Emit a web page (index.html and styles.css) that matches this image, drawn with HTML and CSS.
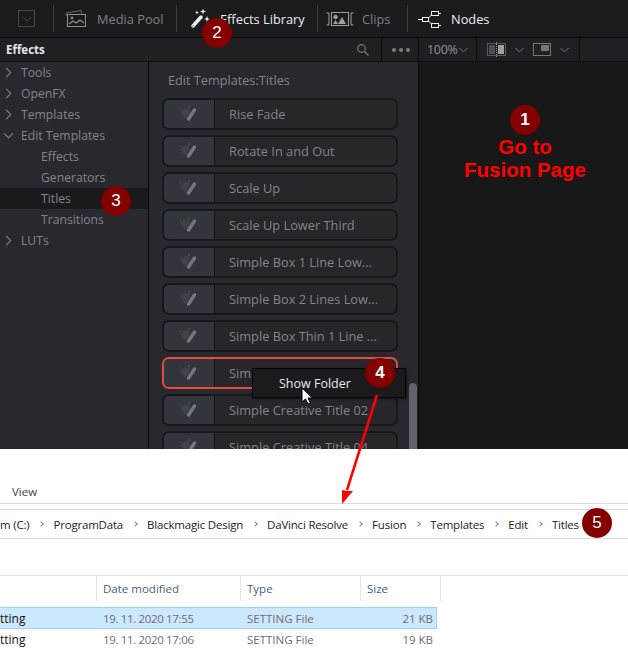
FILE: index.html
```html
<!DOCTYPE html>
<html lang="en">
<head>
    <meta charset="UTF-8">
    <title>Go to Fusion Page</title>
    <link rel="stylesheet" href="styles.css">
</head>
<body>
<div class="shot">

    <div class="app">
        <div class="topbar">
            <div class="tool tool-collapse">
                <svg width="18" height="18" viewBox="0 0 18 18" fill="none" stroke="#48484a"><rect x=".5" y=".5" width="16" height="16"/><path d="M5 7l4 4 4-4"/></svg>
            </div>
            <div class="tool tool-media">
                <svg width="22" height="18" viewBox="0 0 22 18" fill="none" stroke="#909090"><path d="M1 6V3l15-2.500 1 3" stroke="#6a6a6a"/><rect x="2.500" y="4.500" width="18" height="12"/><circle cx="7" cy="8" r="1" fill="#909090"/><path d="M4 14l4-3 3 2 4-3 4 3" stroke-width="1.200"/></svg>
                <span>Media Pool</span>
            </div>
            <div class="tool tool-effects on">
                <svg width="21" height="23" viewBox="0 0 21 23" fill="none"><path d="M3 19L11 10" stroke="#eee" stroke-width="3.500" stroke-linecap="round"/><path d="M2 20l2-2" stroke="#888"/><path d="M13 1.500l.8 2.200 2.200.8-2.200.8-.8 2.200-.8-2.200-2.200-.8 2.200-.8zM17 9l.8 2.200 2.200.8-2.200.8-.8 2.200-.8-2.200-2.200-.8 2.200-.8zM7 3.500l.6 1.400 1.400.6-1.400.6-.6 1.400-.6-1.400-1.400-.6 1.400-.6z" fill="#f2f2f2"/></svg>
                <span>Effects Library</span>
            </div>
            <div class="tool tool-clips">
                <svg width="28" height="14" viewBox="0 0 28 14" fill="none" stroke="#a0a0a0"><path d="M.5 1H3v12H.500M27.500 1H25v12h2.500"/><rect x="5.500" y=".5" width="17" height="13"/><circle cx="9.500" cy="5" r="1.800" fill="#a0a0a0"/><path d="M7 12l2.500-4 2.500 4zM12 12l4-7 4 7z" fill="#a0a0a0" stroke="none"/></svg>
                <span>Clips</span>
            </div>
            <div class="tool tool-nodes on">
                <svg width="23" height="18" viewBox="0 0 23 18" fill="none" stroke="#f0f0f0"><rect x="4.500" y="7.500" width="6" height="4"/><rect x="13.500" y="1.500" width="7" height="4"/><rect x="13.500" y="13.500" width="7" height="4"/><path d="M0 9.500h4.500M10.500 8l3-3M10.500 11l3 3M20.500 3.500H23M20.500 15.500H23"/></svg>
                <span>Nodes</span>
            </div>
        </div>

        <div class="subbar">
            <div class="sub-title">Effects</div>
            <div class="sub-search">
                <svg width="12" height="12" viewBox="0 0 12 12" fill="none" stroke="#77777a" stroke-width="1.200"><circle cx="4.500" cy="4.500" r="3.800"/><path d="M7.500 7.500l4 4"/></svg>
            </div>
            <div class="sub-dots"><i></i><i></i><i></i></div>
            <div class="sub-zoom">100%<svg class="caret" width="9" height="6" viewBox="0 0 9 6" fill="none" stroke="#77777a"><path d="M.5 1l4 4 4-4"/></svg></div>
            <div class="sub-views">
                <svg width="19" height="15" viewBox="0 0 19 15" fill="none"><rect x=".5" y="1.500" width="18" height="12" stroke="#5c5c60"/><rect x="2" y="3" width="6" height="9" fill="#505054"/><rect x="11" y="3" width="6" height="9" fill="#a0a0a2"/><path d="M9.500 0v15" stroke="#99999c" stroke-dasharray="1 1"/></svg>
                <svg class="caret" width="9" height="6" viewBox="0 0 9 6" fill="none" stroke="#77777a"><path d="M.5 1l4 4 4-4"/></svg>
                <svg width="18" height="13" viewBox="0 0 18 13" fill="none"><rect x=".5" y=".5" width="17" height="12" stroke="#77777a"/><rect x="8" y="2" width="8" height="6" fill="#77777a"/></svg>
                <svg class="caret" width="9" height="6" viewBox="0 0 9 6" fill="none" stroke="#77777a"><path d="M.5 1l4 4 4-4"/></svg>
            </div>
            <div class="sub-rest"></div>
        </div>

        <div class="panels">
            <ul class="tree">
                <li><i class="arrow"></i>Tools</li>
                <li><i class="arrow"></i>OpenFX</li>
                <li><i class="arrow"></i>Templates</li>
                <li><i class="arrow open"></i>Edit Templates</li>
                <li class="child">Effects</li>
                <li class="child">Generators</li>
                <li class="child current">Titles</li>
                <li class="child">Transitions</li>
                <li><i class="arrow"></i>LUTs</li>
            </ul>

            <div class="templates">
                <div class="templates-title">Edit Templates:Titles</div>
                <div class="template"><div class="thumb"><svg width="20" height="17" viewBox="0 0 20 17" fill="none"><use href="#wand"/></svg></div><span>Rise Fade</span></div>
                <div class="template"><div class="thumb"><svg width="20" height="17" viewBox="0 0 20 17" fill="none"><use href="#wand"/></svg></div><span>Rotate In and Out</span></div>
                <div class="template"><div class="thumb"><svg width="20" height="17" viewBox="0 0 20 17" fill="none"><use href="#wand"/></svg></div><span>Scale Up</span></div>
                <div class="template"><div class="thumb"><svg width="20" height="17" viewBox="0 0 20 17" fill="none"><use href="#wand"/></svg></div><span>Scale Up Lower Third</span></div>
                <div class="template"><div class="thumb"><svg width="20" height="17" viewBox="0 0 20 17" fill="none"><use href="#wand"/></svg></div><span>Simple Box 1 Line Low...</span></div>
                <div class="template"><div class="thumb"><svg width="20" height="17" viewBox="0 0 20 17" fill="none"><use href="#wand"/></svg></div><span>Simple Box 2 Lines Low...</span></div>
                <div class="template"><div class="thumb"><svg width="20" height="17" viewBox="0 0 20 17" fill="none"><use href="#wand"/></svg></div><span>Simple Box Thin 1 Line ...</span></div>
                <div class="template selected"><div class="thumb"><svg width="20" height="17" viewBox="0 0 20 17" fill="none"><use href="#wand"/></svg></div><span>Sim</span></div>
                <div class="template"><div class="thumb"><svg width="20" height="17" viewBox="0 0 20 17" fill="none"><use href="#wand"/></svg></div><span>Simple Creative Title 02</span></div>
                <div class="template"><div class="thumb"><svg width="20" height="17" viewBox="0 0 20 17" fill="none"><use href="#wand"/></svg></div><span>Simple Creative Title 04</span></div>
                <div class="scrollbar"></div>
            </div>

            <div class="viewer"></div>
        </div>
    </div>

    <div class="explorer">
        <div class="ribbon"><span>View</span></div>
        <div class="address">
            <span>m (C:)</span><i class="chev"></i>
            <span>ProgramData</span><i class="chev"></i>
            <span>Blackmagic Design</span><i class="chev"></i>
            <span>DaVinci Resolve</span><i class="chev"></i>
            <span>Fusion</span><i class="chev"></i>
            <span>Templates</span><i class="chev"></i>
            <span>Edit</span><i class="chev"></i>
            <span>Titles</span>
        </div>
        <div class="files">
            <div class="file-head">
                <div></div>
                <div>Date modified</div>
                <div>Type</div>
                <div>Size</div>
            </div>
            <div class="file-row selected">
                <div class="name">tting</div>
                <div class="date">19. 11. 2020 17:55</div>
                <div>SETTING File</div>
                <div class="size">21 KB</div>
            </div>
            <div class="file-row">
                <div class="name">tting</div>
                <div class="date">19. 11. 2020 17:06</div>
                <div>SETTING File</div>
                <div class="size">19 KB</div>
            </div>
        </div>
    </div>

    <!-- annotations on top of the screenshot -->
    <div class="menu">Show Folder</div>
    <svg class="cursor" width="13" height="18" viewBox="0 0 13 18"><path d="M1 1v14l3.500-3 2.500 5 2.500-1-2.500-5h4.500z" fill="#fff" stroke="#000"/></svg>
    <svg class="pointer" width="40" height="114" viewBox="0 0 40 114" fill="none"><path d="M36 3L6 98" stroke="#f00" stroke-width="2.500"/><path d="M1 112V98l5 1 6 0z" fill="#f00"/></svg>
    <div class="note">Go to<br>Fusion Page</div>
    <div class="badge b1 strong">1</div>
    <div class="badge b2">2</div>
    <div class="badge b3">3</div>
    <div class="badge b4 strong">4</div>
    <div class="badge b5">5</div>

    <svg width="0" height="0" class="defs"><defs><g id="wand"><path d="M1 6l5-4 5 1-1 4-4 6z" fill="#404248"/><path d="M9.500 13L15.500 4" stroke="#74767a" stroke-width="3.500" stroke-linecap="round"/><path d="M9 1h2M1 3h1" stroke="#5a5c60"/></g></defs></svg>
</div>
</body>
</html>
```

FILE: styles.css
```css
* {
    box-sizing: border-box;
}
body {
    margin: 0;
    background: #fff;
    font-family: "Open Sans", sans-serif;
}
.shot {
    position: relative;
    width: 628px;
    height: 650px;
    overflow: hidden;
}
.defs {
    position: absolute;
}

/* resolve window */
.app {
    height: 449px;
    background: #1a1a1c;
    display: flex;
    flex-direction: column;
    overflow: hidden;
}
.topbar {
    height: 38px;
    flex: none;
    display: flex;
    align-items: stretch;
    background: #1b1b1e;
    border-bottom: 1px solid #0a0a0a;
}
.tool {
    display: flex;
    align-items: center;
    font-size: 12.800px;
    color: #7c8288;
    position: relative;
}
.tool::after {
    content: "";
    position: absolute;
    right: 0;
    top: 5px;
    bottom: 5px;
    width: 1px;
    background: #3c3c3e;
}
.tool.on {
    color: #e8eef2;
}
.tool-collapse {
    width: 54px;
    padding-left: 18px;
}
.tool-media {
    width: 123px;
    padding-left: 11px;
    gap: 10px;
}
.tool-effects {
    width: 141px;
    padding-left: 13px;
    gap: 9px;
}
.tool-clips {
    width: 90px;
    padding-left: 8px;
    gap: 8px;
}
.tool-nodes {
    padding-left: 10px;
    gap: 10px;
}
.tool-nodes::after {
    display: none;
}

.subbar {
    height: 24px;
    flex: none;
    display: flex;
    background: #202024;
    border-bottom: 1px solid #0c0c0c;
    color: #a0a0a4;
}
.subbar > div {
    display: flex;
    align-items: center;
    border-right: 1px solid #0c0c0c;
}
.sub-title {
    width: 345px;
    padding-left: 6px;
    font-size: 11.500px;
    font-weight: 700;
    color: #e8e8e8;
    border-right: none !important;
}
.sub-search {
    width: 37px;
    padding-left: 12px;
}
.sub-dots {
    width: 37px;
    padding-left: 10px;
    gap: 3px;
}
.sub-dots i {
    width: 4px;
    height: 4px;
    border-radius: 50%;
    background: #7c7c80;
}
.sub-zoom {
    width: 58px;
    padding-left: 8px;
    font-size: 12.500px;
    letter-spacing: -0.3px;
    color: #8c9298;
    gap: 1px;
}
.sub-views {
    width: 103px;
    padding-left: 10px;
    gap: 9px;
}
.sub-rest {
    flex: 1;
    border-right: none !important;
}

.panels {
    flex: 1;
    display: flex;
    min-height: 0;
}
.tree {
    width: 149px;
    flex: none;
    margin: 0;
    padding: 0;
    list-style: none;
    background: #28282e;
    border-right: 1px solid #0c0c0c;
}
.tree li {
    height: 21px;
    line-height: 21px;
    padding-left: 21px;
    font-size: 12.200px;
    color: #83858a;
    position: relative;
}
.tree li.child {
    padding-left: 41px;
}
.tree li.current {
    background: #1a1a1d;
}
.arrow {
    position: absolute;
    left: 3px;
    top: 7px;
    width: 7px;
    height: 7px;
    border-top: 1px solid #85878c;
    border-right: 1px solid #85878c;
    transform: rotate(45deg);
}
.arrow.open {
    left: 5px;
    top: 5px;
    transform: rotate(135deg);
}

.templates {
    width: 270px;
    flex: none;
    background: #28282e;
    border-right: 1px solid #0c0c0c;
    padding: 9px 0 0 13px;
    position: relative;
    overflow: hidden;
}
.templates-title {
    font-size: 12.700px;
    line-height: 18px;
    margin: 0 0 9px 6px;
    color: #83858a;
}
.template {
    width: 236px;
    height: 32px;
    margin-bottom: 5px;
    display: flex;
    align-items: center;
    background: #26262b;
    border: 2px solid #17171a;
    border-radius: 7px;
    font-size: 12.800px;
    color: #83858a;
    overflow: hidden;
}
.template.selected {
    border-color: #e64b3e;
}
.thumb {
    width: 51px;
    height: 100%;
    flex: none;
    display: flex;
    align-items: center;
    justify-content: center;
    background: #32353b;
    border-right: 1px solid #141416;
    margin-right: 14px;
}
.scrollbar {
    position: absolute;
    top: 321px;
    right: 1px;
    width: 8px;
    height: 80px;
    border-radius: 4px;
    background: #5f6268;
}
.viewer {
    flex: 1;
    background: #181819;
}

/* explorer window */
.explorer {
    height: 201px;
    background: #fff;
    font-size: 11.500px;
    color: #1c1c1c;
}
.ribbon {
    height: 55px;
    padding: 34px 0 0 12px;
    line-height: 18px;
    font-size: 11.500px;
    color: #444;
    border-bottom: 1px solid #dcdcdc;
}
.address {
    height: 30px;
    margin-top: 5px;
    display: flex;
    align-items: center;
    gap: 10px;
    border-top: 1px solid #dcdcdc;
    border-bottom: 1px solid #dcdcdc;
    white-space: nowrap;
    letter-spacing: -0.2px;
}
.chev {
    width: 4px;
    height: 4px;
    border-top: 1.500px solid #888;
    border-right: 1.500px solid #888;
    transform: rotate(45deg);
}
.files {
    margin-top: 36px;
    border-top: 1px solid #e4e4e4;
}
.file-head,
.file-row {
    display: grid;
    grid-template-columns: 97px 144px 120px 80px;
    align-items: center;
}
.file-head {
    height: 25px;
    margin-bottom: 6px;
    color: #4c607a;
}
.file-head > div {
    height: 100%;
    line-height: 25px;
    padding-left: 6px;
    border-right: 1px solid #e4e4e4;
}
.file-row {
    width: 437px;
    height: 22px;
    color: #6d6d6d;
    border: 1px solid transparent;
    border-left: none;
    margin-bottom: -1px;
    grid-template-columns: 97px 144px 120px 75px;
}
.file-row.selected {
    background: #cce8ff;
    border-color: #99d1ff;
}
.file-row > div {
    padding-left: 6px;
}
.file-row .name {
    padding-left: 0;
    font-size: 12px;
    color: #111;
}
.file-row .date {
    letter-spacing: -0.35px;
}
.file-row .size {
    text-align: right;
    padding-right: 3px;
}

/* annotations */
.menu {
    position: absolute;
    left: 252px;
    top: 368px;
    width: 154px;
    height: 30px;
    padding-left: 26px;
    line-height: 29px;
    font-size: 12.500px;
    color: #e4e8ec;
    background: #1b1b1d;
    border: 1px solid #060606;
    box-shadow: 1px 1px 2px rgba(0, 0, 0, 0.5);
}
.cursor {
    position: absolute;
    left: 301px;
    top: 387px;
}
.pointer {
    position: absolute;
    left: 341px;
    top: 392px;
}
.note {
    position: absolute;
    left: 425px;
    top: 135px;
    width: 200px;
    text-align: center;
    font-family: "Liberation Sans", sans-serif;
    font-size: 20.500px;
    line-height: 23px;
    font-weight: 700;
    color: #f00;
}
.badge {
    position: absolute;
    width: 30px;
    height: 30px;
    border-radius: 50%;
    background: #840000;
    color: #fff;
    text-align: center;
    font-family: "Liberation Sans", sans-serif;
    font-size: 17px;
    line-height: 30px;
}
.badge.strong {
    font-weight: 700;
}
.b1 {
    left: 510px;
    top: 105px;
}
.b2 {
    left: 202px;
    top: 18px;
}
.b3 {
    left: 101px;
    top: 186px;
}
.b4 {
    left: 365px;
    top: 358px;
}
.b5 {
    left: 582px;
    top: 508px;
}
```
